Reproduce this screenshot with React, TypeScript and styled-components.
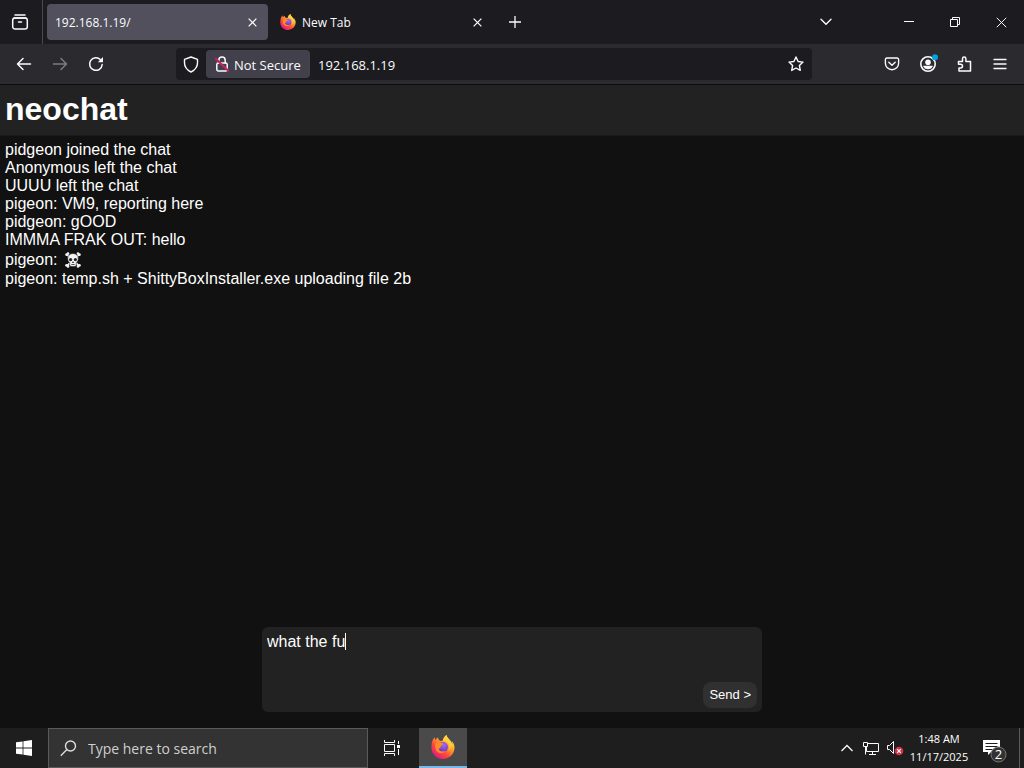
import React, { useState } from "react";
import styled, { createGlobalStyle } from "styled-components";

const uiFont = `"Open Sans", "Noto Sans", sans-serif`;
const pageFont = `"Liberation Sans", Arial, sans-serif`;

const GlobalStyle = createGlobalStyle`
  * { box-sizing: border-box; }
  body { margin: 0; background: #111; color: #fff; }
  button, textarea, input { font: inherit; color: inherit; }
  svg { display: block; flex: none; }
`;

const Screen = styled.div`
  display: flex;
  flex-direction: column;
  min-height: 100vh;
`;

/* ---------- browser chrome ---------- */

const TabBar = styled.div`
  display: flex;
  align-items: stretch;
  height: 44px;
  background: #1c1b20;
  color: #fbfbfe;
  font: 12px/16px ${uiFont};
`;

const IconButton = styled.button<{ $w?: number; $dim?: boolean }>`
  display: flex;
  align-items: center;
  justify-content: center;
  flex: none;
  width: ${(p) => p.$w ?? 36}px;
  padding: 0;
  border: 0;
  background: none;
  color: ${(p) => (p.$dim ? "#7c7b82" : "#fbfbfe")};
`;

const ViewSlot = styled.div`
  display: flex;
  width: 43px;
  border-right: 1px solid #4a4950;
  margin-right: 4px;
`;

const Tab = styled.div<{ $active?: boolean }>`
  display: flex;
  align-items: center;
  gap: 6px;
  flex: 0 1 221px;
  margin: 4px 4px 4px 0;
  padding: 0 0 0 8px;
  border-radius: 4px;
  background: ${(p) => (p.$active ? "#52505c" : "transparent")};
`;

const TabTitle = styled.span`
  flex: 1;
  padding-top: 2px;
  white-space: nowrap;
`;

const TabTools = styled.div`
  display: flex;
  margin-left: auto;
  padding-right: 23px;
`;

const WindowControls = styled.div`
  display: flex;
`;

const Toolbar = styled.div`
  display: flex;
  align-items: center;
  height: 41px;
  padding: 0 6px;
  background: #2b2a2f;
  border-bottom: 1px solid #0d0d10;
  color: #fbfbfe;
`;

const NavGroup = styled.div`
  display: flex;
  height: 32px;
`;

const UrlBar = styled.div`
  display: flex;
  align-items: center;
  flex: 1;
  height: 32px;
  margin: 0 62px;
  border-radius: 4px;
  background: #1c1b20;
  font: 13px/18px ${uiFont};
`;

const SecurityChip = styled.button`
  display: flex;
  align-items: center;
  flex: none;
  gap: 4px;
  width: 104px;
  height: 28px;
  padding: 0 8px;
  border: 0;
  border-radius: 4px;
  background: #42414b;
  white-space: nowrap;
`;

const ChipLabel = styled.span`
  padding-top: 2px;
`;

const UrlInput = styled.input`
  flex: 1;
  min-width: 0;
  padding: 2px 8px 0;
  border: 0;
  outline: 0;
  background: none;
`;

/* ---------- chat page ---------- */

const Page = styled.main`
  display: flex;
  flex: 1;
  flex-direction: column;
  background: #111;
  font: 16px/18px ${pageFont};
`;

const PageHeader = styled.header`
  padding: 4px 5px 6px;
  background: #222;
  border-bottom: 1px solid #1a1a1a;
`;

const Title = styled.h1`
  margin: 0;
  font-size: 32px;
  line-height: 40px;
`;

const Messages = styled.ul`
  flex: 1;
  margin: 0;
  padding: 5px;
  list-style: none;
`;

const Message = styled.li`
  display: flex;
  align-items: center;
  gap: 7px;
  min-height: 18px;
`;

const SkullIcon = styled.svg`
  margin: 3px 0 2px;
`;

const Composer = styled.form`
  position: relative;
  display: flex;
  flex-direction: column;
  width: 500px;
  max-width: 100%;
  height: 85px;
  margin: 0 auto 16px;
  padding: 6px 5px 4px;
  border-radius: 6px;
  background: #222;
`;

const MessageBox = styled.textarea`
  flex: 1;
  min-height: 0;
  padding: 0;
  border: 0;
  outline: 0;
  resize: none;
  background: none;
  caret-color: transparent;
`;

const Caret = styled.span`
  position: absolute;
  top: 6px;
  left: 83px;
  width: 1px;
  height: 17px;
  background: #fff;
`;

const SendButton = styled.button`
  align-self: flex-end;
  height: 26px;
  padding: 0 6px;
  border: 0;
  border-radius: 8px;
  background: #303030;
  font-size: 13px;
  line-height: 16px;
`;

/* ---------- taskbar ---------- */

const Taskbar = styled.footer`
  display: flex;
  height: 40px;
  background: #1e1e1e;
  font: 12px/18px ${uiFont};
`;

const SearchBox = styled.label`
  display: flex;
  align-items: center;
  gap: 11px;
  flex: 0 1 320px;
  padding: 0 11px;
  border: 1px solid #5a5a5a;
  background: #333;
`;

const SearchInput = styled.input`
  flex: 1;
  min-width: 0;
  padding: 2px 0 0;
  border: 0;
  outline: 0;
  background: none;
  font-size: 14px;
  &::placeholder { color: #cfcfcf; opacity: 1; }
`;

const TaskApp = styled.button`
  display: flex;
  align-items: center;
  justify-content: center;
  width: 48px;
  margin-left: 3px;
  padding: 0;
  border: 0;
  border-bottom: 2px solid #76b9ed;
  background: #4a4a4a;
`;

const Tray = styled.div`
  display: flex;
  align-items: center;
  margin-left: auto;
`;

const Clock = styled.time`
  width: 64px;
  font-size: 11px;
  text-align: center;
  white-space: nowrap;
`;

const DesktopEdge = styled.div`
  align-self: stretch;
  width: 5px;
  border-left: 1px solid #5c5c5c;
`;

const line = { fill: "none", stroke: "currentColor" } as const;

function FirefoxLogo({ size, id }: { size: number; id: string }) {
  return (
    <svg width={size} height={size} viewBox="0 0 24 24" aria-hidden="true">
      <defs>
        <linearGradient id={`${id}-flame`} x1="0.85" y1="0.1" x2="0.2" y2="0.95">
          <stop offset="0" stopColor="#fff44f" />
          <stop offset="0.35" stopColor="#ffa02e" />
          <stop offset="0.65" stopColor="#ff4a3a" />
          <stop offset="1" stopColor="#e31587" />
        </linearGradient>
        <radialGradient id={`${id}-globe`} cx="0.6" cy="0.3" r="0.8">
          <stop offset="0" stopColor="#a667f5" />
          <stop offset="1" stopColor="#5a35b8" />
        </radialGradient>
      </defs>
      <path
        fill={`url(#${id}-flame)`}
        d="M22.8 9.2c-.5-1.300-1.600-2.700-2.400-3.100.7 1.300 1 2.500 1.100 3.300-1.300-3.200-3.500-4.500-5.200-7.300-.4-.7-.7-1.300-.5-2.100-2.400 1-3.700 3.600-4 5.400-.8.1-1.500.3-2.200.6C7.400 5.300 7 3.500 7.200 2.500 5.900 3.100 5 4.100 4.300 4.900c-.6-.7-.6-2.100-.4-2.900C2.100 3.500.7 6.800.6 9.600L.4 13C.8 19.200 5.800 24 12 24c6.400 0 11.500-5.100 11.500-11.500 0-1.200-.3-2.300-.7-3.300z"
      />
      <circle cx="12" cy="12" r="5" fill={`url(#${id}-globe)`} />
      <path fill="#ff8a26" d="M4.500 8.500c2-1.500 4-1.200 5.100-.7 1 .1 2 .3 2.800.9-.3 1.500-2.300 1.400-2.600 2.700-.2 1.700-1.500 1.800-2.300 2.600 1 2.600 4.500 3.300 6.700 1.600-1.300 3.600-7.200 3.500-9.200-.6-1.100-2.200-1.100-4.600-.5-6.500z" />
      <path fill="#ffd23e" d="M15.800 0c-2.400 1-3.500 3.400-3.700 5.400 3 .2 5.400 2 6 4.600.5 2.300 0 4.300-1 6 3.600-2.500 4.700-7 2.300-10.300C18.200 4 15.400 2.300 15.800 0z" opacity=".85" />
    </svg>
  );
}

function CloseX({ size = 9, width = 1.4 }: { size?: number; width?: number }) {
  return (
    <svg width={size} height={size} viewBox="0 0 10 10" {...line} strokeWidth={width}>
      <path d="M.7.7l8.600 8.600M9.300.7L.7 9.300" />
    </svg>
  );
}

const log = [
  "pidgeon joined the chat",
  "Anonymous left the chat",
  "UUUU left the chat",
  "pigeon: VM9, reporting here",
  "pidgeon: gOOD",
  "IMMMA FRAK OUT: hello",
];

export default function App() {
  const [draft, setDraft] = useState("what the fu");
  const [url, setUrl] = useState("192.168.1.19");

  return (
    <Screen>
      <GlobalStyle />
      <TabBar>
        <ViewSlot>
          <IconButton $w={40} aria-label="Firefox View">
            <svg width="18" height="16" viewBox="0 0 18 16" {...line} strokeWidth="1.500" strokeLinecap="round">
              <path d="M4 1h10" />
              <rect x="1.700" y="4" width="14.600" height="11" rx="2.300" />
              <path d="M3 4h12M7.500 8h3" />
            </svg>
          </IconButton>
        </ViewSlot>
        <Tab $active>
          <TabTitle>192.168.1.19/</TabTitle>
          <IconButton $w={32} aria-label="Close tab"><CloseX /></IconButton>
        </Tab>
        <Tab>
          <FirefoxLogo size={16} id="tab" />
          <TabTitle>New Tab</TabTitle>
          <IconButton $w={32} aria-label="Close tab"><CloseX /></IconButton>
        </Tab>
        <IconButton aria-label="New tab">
          <svg width="12" height="12" viewBox="0 0 12 12" {...line} strokeWidth="1.300"><path d="M6 0v12M0 6h12" /></svg>
        </IconButton>
        <TabTools>
          <IconButton $w={74} aria-label="List all tabs">
            <svg width="12" height="8" viewBox="0 0 12 8" {...line} strokeWidth="1.400" strokeLinecap="round"><path d="M1 1.300l5 5 5-5" /></svg>
          </IconButton>
        </TabTools>
        <WindowControls>
          <IconButton $w={46} aria-label="Minimize">
            <svg width="10" height="10" viewBox="0 0 10 10" {...line}><path d="M0 4.500h10" /></svg>
          </IconButton>
          <IconButton $w={46} aria-label="Restore">
            <svg width="10" height="10" viewBox="0 0 10 10" {...line}><path d="M.5 2.500h7v7h-7zM2.500 2.500v-2h7v7h-2" /></svg>
          </IconButton>
          <IconButton $w={46} aria-label="Close"><CloseX size={11} width={0.9} /></IconButton>
        </WindowControls>
      </TabBar>

      <Toolbar>
        <NavGroup>
          <IconButton aria-label="Back">
            <svg width="16" height="14" viewBox="0 0 16 14" {...line} strokeWidth="1.500" strokeLinecap="round" strokeLinejoin="round"><path d="M14.500 7H1.500M7 1.500L1.500 7 7 12.500" /></svg>
          </IconButton>
          <IconButton $dim aria-label="Forward">
            <svg width="16" height="14" viewBox="0 0 16 14" {...line} strokeWidth="1.500" strokeLinecap="round" strokeLinejoin="round"><path d="M1.500 7h13M9 1.500L14.500 7 9 12.500" /></svg>
          </IconButton>
          <IconButton aria-label="Reload">
            <svg width="16" height="16" viewBox="0 0 16 16" {...line} strokeWidth="1.500" strokeLinecap="round">
              <path d="M14.200 8.500A6.300 6.300 0 1 1 12.500 3.700" />
              <path d="M15 1v5.200H9.800z" fill="currentColor" stroke="none" />
            </svg>
          </IconButton>
        </NavGroup>
        <UrlBar>
          <IconButton $w={30} aria-label="Tracking protection">
            <svg width="16" height="17" viewBox="0 0 16 17" {...line} strokeWidth="1.400" strokeLinejoin="round">
              <path d="M8 1l6.500 2.400v3.400c0 4-2.300 7.200-6.500 9.200-4.200-2-6.500-5.200-6.500-9.200V3.400z" />
            </svg>
          </IconButton>
          <SecurityChip>
            <svg width="16" height="16" viewBox="0 0 16 16" {...line} strokeWidth="1.500" strokeLinecap="round">
              <path d="M4.800 7V4.300a3.200 3.200 0 0 1 6.400 0V7" />
              <rect x="2.800" y="7" width="10.400" height="8" rx="1.500" />
              <path d="M2 3l12 11.500" stroke="#c4225c" strokeWidth="2.200" />
            </svg>
            <ChipLabel>Not Secure</ChipLabel>
          </SecurityChip>
          <UrlInput aria-label="Address" value={url} onChange={(e) => setUrl(e.target.value)} />
          <IconButton $w={32} aria-label="Bookmark this page">
            <svg width="16" height="16" viewBox="0 0 16 16" {...line} strokeWidth="1.400" strokeLinejoin="round">
              <path d="M8 1l2.100 4.500 4.900.6-3.600 3.400.9 4.900L8 12l-4.300 2.400.9-4.900L1 6.100l4.900-.6z" />
            </svg>
          </IconButton>
        </UrlBar>
        <NavGroup>
          <IconButton aria-label="Save to Pocket">
            <svg width="16" height="14" viewBox="0 0 16 14" {...line} strokeWidth="1.400" strokeLinecap="round" strokeLinejoin="round">
              <path d="M2.800 1h10.400a1.400 1.400 0 0 1 1.400 1.400V6.200a6.600 6.600 0 0 1-13.200 0V2.400A1.400 1.400 0 0 1 2.800 1z" />
              <path d="M4.800 5.200L8 8.200l3.200-3" />
            </svg>
          </IconButton>
          <IconButton aria-label="Account">
            <svg width="20" height="20" viewBox="0 0 20 20" {...line}>
              <circle cx="10" cy="10" r="7.200" strokeWidth="1.600" />
              <circle cx="10" cy="8.200" r="2.800" fill="currentColor" stroke="none" />
              <path d="M5 11.800h10c-.8 2.400-2.700 3.500-5 3.500s-4.200-1.100-5-3.500z" fill="currentColor" stroke="none" />
              <circle cx="17" cy="3.200" r="3" fill="#00a2e0" stroke="none" />
            </svg>
          </IconButton>
          <IconButton aria-label="Extensions">
            <svg width="16" height="18" viewBox="0 0 16 18" {...line} strokeWidth="1.500" strokeLinejoin="round">
              <path d="M2.500 9V6.500h4V3.800a1.700 1.700 0 0 1 3.400 0v2.700h4.600V16H3v-3h1.600a1.900 1.900 0 0 0 0-3.800H2.500z" />
            </svg>
          </IconButton>
          <IconButton aria-label="Menu">
            <svg width="14" height="12" viewBox="0 0 14 12" {...line} strokeWidth="1.300" strokeLinecap="round"><path d="M1 1.500h12M1 6h12M1 10.500h12" /></svg>
          </IconButton>
        </NavGroup>
      </Toolbar>

      <Page>
        <PageHeader><Title>neochat</Title></PageHeader>
        <Messages>
          {log.map((text) => <Message key={text}>{text}</Message>)}
          <Message>
            pigeon:
            <SkullIcon width="16" height="16" viewBox="0 0 16 16" role="img" aria-label="skull and crossbones">
              <path d="M2 2.500l12 11.500M14 2.500L2 14" stroke="#f4f4f4" strokeWidth="2" />
              <g fill="#f4f4f4">
                <circle cx="1.600" cy="2.700" r="1.400" /><circle cx="3" cy="1.500" r="1.300" />
                <circle cx="14.400" cy="2.700" r="1.400" /><circle cx="13" cy="1.500" r="1.300" />
                <circle cx="1.600" cy="13.300" r="1.400" /><circle cx="3" cy="14.500" r="1.300" />
                <circle cx="14.400" cy="13.300" r="1.400" /><circle cx="13" cy="14.500" r="1.300" />
                <path d="M8 1.500c3.400 0 5.300 2.300 5.300 5 0 2-.8 3.200-2 4v2.800c0 .8-1.600 1.300-3.300 1.300s-3.300-.5-3.300-1.300v-2.800c-1.200-.8-2-2-2-4 0-2.700 1.900-5 5.300-5z" stroke="#222" strokeWidth=".6" />
              </g>
              <g fill="#222">
                <circle cx="5.600" cy="7.600" r="1.600" /><circle cx="10.400" cy="7.600" r="1.600" />
                <path d="M8 9l1 2H7zM6.300 12.300h3.400v.8H6.300z" />
              </g>
            </SkullIcon>
          </Message>
          <Message>pigeon: temp.sh + ShittyBoxInstaller.exe uploading file 2b</Message>
        </Messages>
        <Composer onSubmit={(e) => e.preventDefault()}>
          <MessageBox aria-label="Message" value={draft} onChange={(e) => setDraft(e.target.value)} />
          <Caret />
          <SendButton type="submit">Send &gt;</SendButton>
        </Composer>
      </Page>

      <Taskbar>
        <IconButton $w={48} aria-label="Start">
          <svg width="16" height="16" viewBox="0 0 16 16" fill="#fff"><path d="M0 2.300L6.600 1.400v6.200H0zM7.400 1.300L16 0v7.600H7.400zM0 8.400h6.600v6.200L0 13.700zM7.400 8.400H16V16l-8.600-1.300z" /></svg>
        </IconButton>
        <SearchBox>
          <svg width="17" height="17" viewBox="0 0 17 17" fill="none" stroke="#ddd" strokeWidth="1.400"><circle cx="10.500" cy="6" r="5" /><path d="M6.900 9.600L.8 15.800" /></svg>
          <SearchInput aria-label="Search" placeholder="Type here to search" />
        </SearchBox>
        <IconButton $w={48} aria-label="Task View">
          <svg width="16" height="16" viewBox="0 0 16 16" {...line}>
            <path d="M.5 0v2.500h10V0M.5 16v-2.500h10V16M.5 4.500h10v7H.5zM14.500 1v3M14.500 9v6" />
            <path d="M13 5h3v3h-3z" fill="currentColor" stroke="none" />
          </svg>
        </IconButton>
        <TaskApp aria-label="Firefox"><FirefoxLogo size={24} id="task" /></TaskApp>
        <Tray>
          <IconButton $w={24} aria-label="Show hidden icons">
            <svg width="12" height="8" viewBox="0 0 12 8" {...line} strokeWidth="1.300"><path d="M.5 7L6 1.500 11.500 7" /></svg>
          </IconButton>
          <IconButton $w={24} aria-label="Network">
            <svg width="16" height="15" viewBox="0 0 16 15" {...line}><path d="M5 2.500h10.500v8H3.500V6M9.500 10.500v3M6 13.500h7M.5 1.500h4v4h-4zM2.500 5.500v8" /></svg>
          </IconButton>
          <IconButton $w={24} aria-label="Volume muted">
            <svg width="18" height="16" viewBox="0 0 18 16" {...line}>
              <path d="M1.500 5.500h2l4-4v12l-4-4h-2z" />
              <circle cx="13" cy="11" r="4.300" fill="#d13445" stroke="none" />
              <path d="M11.200 9.200l3.600 3.600M14.800 9.200l-3.600 3.600" strokeWidth="1.200" />
            </svg>
          </IconButton>
          <Clock>1:48 AM<br />11/17/2025</Clock>
          <IconButton $w={48} aria-label="2 notifications">
            <svg width="28" height="30" viewBox="0 0 28 30">
              <path fill="#fff" d="M2 7h17v12h-9l-3 3v-3H2z" />
              <path d="M4.500 10.500h12M4.500 13.500h12M4.500 16.500h7" stroke="#1e1e1e" />
              <circle cx="17.500" cy="21.500" r="7.500" fill="#333" stroke="#777" />
              <text x="17.500" y="26" fill="#fff" fontFamily="Open Sans, sans-serif" fontSize="13" textAnchor="middle">2</text>
            </svg>
          </IconButton>
          <DesktopEdge />
        </Tray>
      </Taskbar>
    </Screen>
  );
}
